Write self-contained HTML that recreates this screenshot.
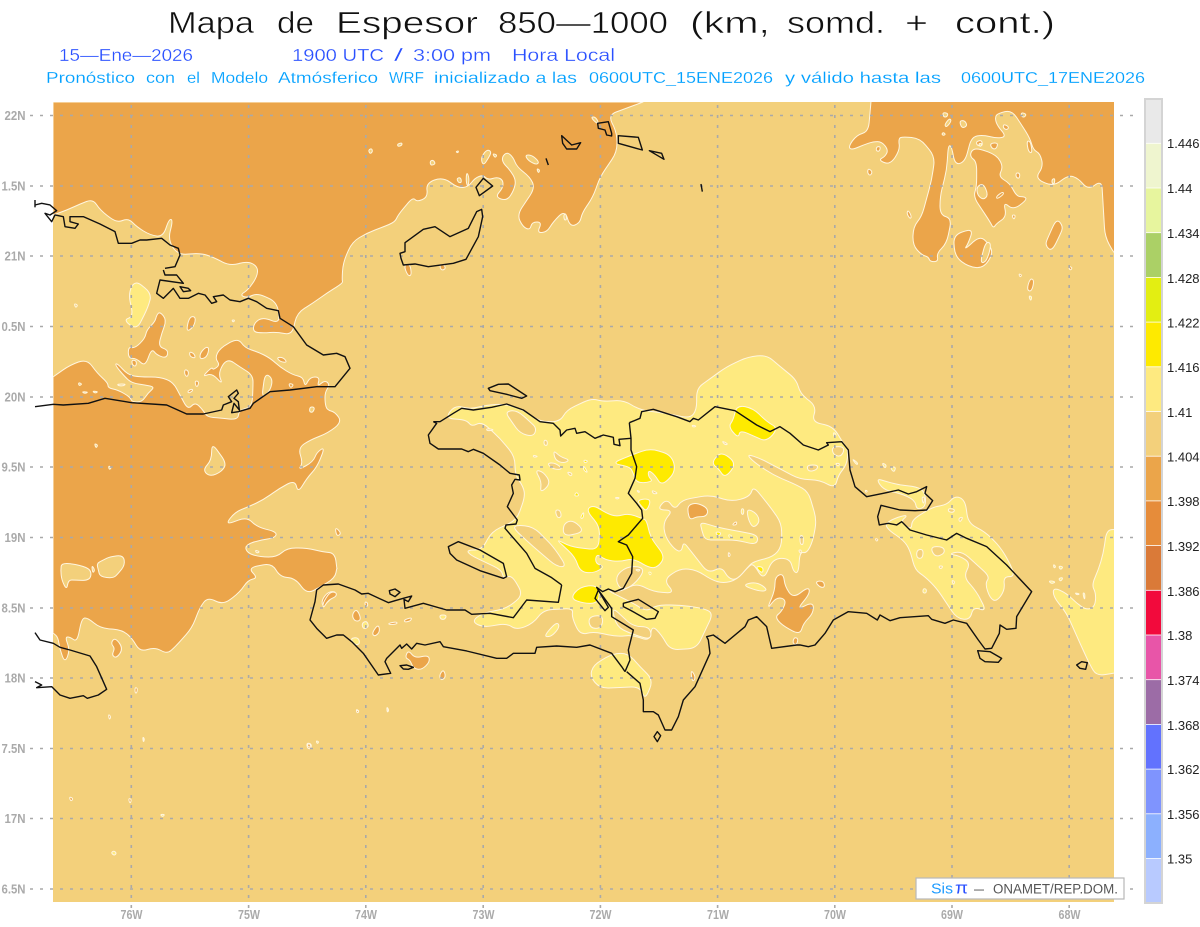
<!DOCTYPE html>
<html><head><meta charset="utf-8"><style>
html,body{margin:0;padding:0;background:#fff}
svg{display:block;font-family:"Liberation Sans",sans-serif}
.b{fill:#f3d07b}.o{fill:#eba54a}.y{fill:#feea80}.Y{fill:#feea00}
.m polygon,.m path{stroke:#fff6e0;stroke-linejoin:round}
.k polygon,.k polyline{fill:none;stroke:#111;stroke-linejoin:round}
.a{font-size:13px;font-weight:bold;fill:#aaa}
.l{font-size:13px;fill:#222}
.t{font-size:31px;fill:#111;stroke:#fff;stroke-width:.55px}
.u{font-size:17.5px;fill:#2a50ff;stroke:#fff;stroke-width:.25px}
.v{font-size:16px;fill:#00a0ff;stroke:#fff;stroke-width:.15px}
</style></head><body>
<svg width="1200" height="927" viewBox="0 0 1200 927" xmlns="http://www.w3.org/2000/svg">
<defs><clipPath id="mc"><rect x="53" y="102" width="1061" height="800"/></clipPath></defs>
<rect width="1200" height="927" fill="#fff"/>
<g class="t">
<text x="168" y="33" textLength="86" lengthAdjust="spacingAndGlyphs">Mapa</text>
<text x="277" y="33" textLength="37" lengthAdjust="spacingAndGlyphs">de</text>
<text x="336" y="33" textLength="142" lengthAdjust="spacingAndGlyphs">Espesor</text>
<text x="498" y="33" textLength="170" lengthAdjust="spacingAndGlyphs">850—1000</text>
<text x="690" y="33" textLength="80" lengthAdjust="spacingAndGlyphs">(km,</text>
<text x="787" y="33" textLength="98" lengthAdjust="spacingAndGlyphs">somd.</text>
<text x="905" y="33" textLength="23" lengthAdjust="spacingAndGlyphs">+</text>
<text x="955" y="33" textLength="100" lengthAdjust="spacingAndGlyphs">cont.)</text>
</g>
<g class="u">
<text x="59" y="61" textLength="134" lengthAdjust="spacingAndGlyphs">15—Ene—2026</text>
<text x="292" y="61" textLength="92" lengthAdjust="spacingAndGlyphs">1900 UTC</text>
<text x="394" y="61" textLength="9" lengthAdjust="spacingAndGlyphs">/</text>
<text x="413" y="61" textLength="78" lengthAdjust="spacingAndGlyphs">3:00 pm</text>
<text x="512" y="61" textLength="103" lengthAdjust="spacingAndGlyphs">Hora Local</text>
</g>
<g class="v">
<text x="46" y="83" textLength="89" lengthAdjust="spacingAndGlyphs">Pronóstico</text>
<text x="146" y="83" textLength="29" lengthAdjust="spacingAndGlyphs">con</text>
<text x="187" y="83" textLength="13" lengthAdjust="spacingAndGlyphs">el</text>
<text x="211" y="83" textLength="57" lengthAdjust="spacingAndGlyphs">Modelo</text>
<text x="278" y="83" textLength="100" lengthAdjust="spacingAndGlyphs">Atmósferico</text>
<text x="389" y="83" textLength="35" lengthAdjust="spacingAndGlyphs">WRF</text>
<text x="434" y="83" textLength="143" lengthAdjust="spacingAndGlyphs">inicializado a las</text>
<text x="589" y="83" textLength="184" lengthAdjust="spacingAndGlyphs">0600UTC_15ENE2026</text>
<text x="785" y="83" textLength="156" lengthAdjust="spacingAndGlyphs">y válido hasta las</text>
<text x="961" y="83" textLength="184" lengthAdjust="spacingAndGlyphs">0600UTC_17ENE2026</text>
</g>

<rect x="53" y="102" width="1061" height="800" class="b"/>
<g clip-path="url(#mc)"><g class="m">
<g stroke-width="1">
<polygon class="o" points="53,102 643,102 627,108 608,115 617,133 617,152 600,177 593,197 582,213 580,223 570,227 565,210 553,222 547,232 537,233 542,222 532,222 530,230 523,227 517,215 535,188 530,177 517,167 513,157 507,152 502,157 503,163 510,170 516,180 514,190 507,201 495,197 503,188 503,180 497,177 488,180 483,175 475,178 468,187 458,188 443,177 426,183 428,197 417,202 413,197 398,215 395,222 383,227 367,233 352,242 343,263 342,280 343,283 327,293 313,303 297,313 292,335 277,332 263,333 253,332 254,323 263,317 280,324 277,302 257,293 247,298 240,295 248,290 257,277 258,267 248,261 230,266 213,257 200,253 178,255 168,240 173,220 169,219 163,237 150,235 137,227 128,218 117,223 100,210 93,199 80,204 67,210 53,215"/>
<polygon class="o" points="53,377 70,365 87,359 97,373 108,383 108,388 118,390 130,397 132,402 142,402 148,393 155,387 145,385 132,383 125,377 115,365 117,363 128,375 140,377 160,377 173,382 180,395 188,410 195,402 203,410 207,417 220,418 238,420 239,410 252,407 253,388 253,375 240,367 227,358 218,373 223,385 212,373 202,377 212,367 213,370 220,365 215,358 220,348 238,338 245,348 258,352 270,358 280,367 293,375 303,377 305,387 310,377 320,377 317,387 325,380 330,385 325,392 325,403 327,410 335,412 342,422 328,433 310,440 298,448 303,463 298,470 313,462 317,452 325,447 317,467 307,478 298,493 295,480 280,488 263,500 248,507 235,512 225,525 247,517 257,527 277,532 275,538 260,540 245,545 247,553 260,557 277,557 287,548 307,548 323,552 335,553 337,570 337,567 335,578 320,587 307,594 295,578 280,577 272,563 248,568 258,578 248,580 240,592 223,605 208,597 200,607 192,628 175,647 167,654 155,647 140,652 132,638 122,630 100,628 88,618 82,618 77,642 70,637 65,637 70,650 65,663 60,650 58,637 53,633"/>
</g>

<g transform="translate(840,100) scale(.33333)" stroke-width="3">
<polygon class="o" points="93,5 85,95 50,105 25,140 35,150 70,135 100,125 125,125 145,150 135,170 115,180 150,195 180,150 175,115 190,110 240,115 285,170 275,240 245,350 220,380 218,435 245,465 265,470 270,485 295,485 290,460 320,430 335,355 300,345 300,290 320,210 325,135 335,140 345,195 375,185 395,110 430,105 470,115 500,110 470,75 465,50 475,40 515,30 545,75 570,115 580,150 600,160 610,200 585,235 640,260 685,225 715,235 745,270 785,240 795,410 822,460 830,460 830,0 93,0"/>
<polygon class="o" points="390,170 395,150 415,145 470,165 490,200 475,230 510,250 530,290 555,290 560,300 520,330 490,305 500,350 470,370 460,385 450,365 400,290 410,260 410,185"/>
<polygon class="b" points="410,260 430,250 445,285 430,300 412,285"/>
<polygon class="o" points="650,355 670,380 660,405 635,455 615,435 625,410"/>
<polygon class="o" points="340,405 400,385 385,430 372,450 420,408 445,430 460,460 430,505 385,500 345,470"/>
<polygon class="b" points="437,425 455,430 440,485 420,490"/>
<polygon class="o" points="205,330 215,350 210,357 200,340"/>
<polygon class="o" points="85,205 98,215 90,228 82,218"/>
<polygon class="o" points="570,535 583,540 575,575 560,570"/>
<polygon class="b" points="308,37 325,40 320,52 310,50"/>
<polygon class="b" points="328,55 335,62 320,82 313,75"/>
<polygon class="b" points="358,62 375,62 382,78 365,85"/>
<polygon class="b" points="310,97 317,103 310,107 305,102"/>
<polygon class="b" points="545,37 560,43 552,53 543,47"/>
<polygon class="o" points="490,72 507,80 502,90 490,85"/>
<polygon class="o" points="450,130 475,128 468,148 455,145"/>
<polygon class="o" points="560,122 572,125 577,160 565,155"/>
<polygon class="o" points="408,125 425,120 428,138 412,137"/>
<polygon class="o" points="528,218 540,220 538,236 528,232"/>
<polygon class="o" points="515,345 527,345 522,360"/>
<polygon class="o" points="110,140 122,140 118,155 108,152"/>
<polygon class="o" points="536,521 546,525 540,532"/>
<polygon class="o" points="685,498 698,503 690,512"/>
<polygon class="o" points="468,290 488,275 492,282 472,297"/>
<polygon class="b" points="636,238 645,235 643,252 636,250"/>
<polygon class="y" points="566,587 576,590 572,604"/>
<polygon class="y" points="415,130 427,130 421,142"/>
</g>

<g transform="translate(340,100) scale(.33333)" stroke-width="3">
<polygon class="b" points="422,175 440,148 455,155 445,175 430,197"/>
<polygon class="b" points="457,160 472,165 465,174"/>
<polygon class="b" points="555,165 575,165 598,185 590,195 565,182"/>
<polygon class="b" points="590,205 600,210 595,220"/>
<polygon class="b" points="752,52 765,50 775,65 772,72"/>
<polygon class="b" points="270,183 280,180 287,192 272,197"/>
<polygon class="b" points="350,235 362,232 365,248 355,248"/>
<polygon class="b" points="380,215 388,235 384,262 378,245"/>
<polygon class="b" points="85,150 95,145 98,155 90,162"/>
<polygon class="b" points="172,132 186,128 186,136 174,140"/>
<polygon class="b" points="347,155 356,152 354,159"/>
<polygon class="b" points="671,345 678,340 680,360 673,360"/>
<polygon class="o" points="298,497 310,492 318,505 305,512"/>
<polygon class="o" points="195,495 210,492 215,525 205,528 195,508"/>
</g>

<g transform="translate(30,270) scale(.33333)" stroke-width="3">
<polygon class="y" points="315,30 365,70 355,110 320,180 280,150 310,140 295,70"/>
<polygon class="o" points="390,125 410,150 395,190 385,230 415,240 410,265 380,255 365,235 345,290 320,265 295,265 295,230 315,235 345,205 350,180 375,155 380,135"/>
<polygon class="o" points="478,140 498,140 492,170 468,187"/>
<polygon class="o" points="528,230 538,235 530,262 510,268 510,250"/>
<polygon class="o" points="478,245 492,250 497,265 480,260"/>
<polygon class="o" points="465,297 477,305 472,322 463,312"/>
<polygon class="o" points="740,262 760,262 772,278 750,275"/>
<polygon class="b" points="705,310 728,325 722,360 695,385"/>
<polygon class="o" points="495,332 507,335 503,350 497,348"/>
<polygon class="o" points="483,357 490,360 478,370 472,365"/>
<polygon class="o" points="305,270 320,272 318,290 307,285"/>
<polygon class="o" points="775,340 792,343 782,355"/>
<polygon class="o" points="915,770 935,790 920,800"/>
<polygon class="b" points="545,518 590,580 575,605 540,620 518,600 545,570"/>
<polygon class="b" points="193,520 204,525 198,535"/>
<polygon class="b" points="145,337 157,342 147,348"/>
<polygon class="b" points="155,365 175,366 165,371"/>
<polygon class="b" points="187,363 205,365 195,370"/>
<polygon class="b" points="840,410 855,412 848,428 838,425"/>
<polygon class="b" points="262,342 288,342 280,348 265,347"/>
<polygon class="b" points="235,587 245,592 238,600"/>
<polygon class="b" points="132,100 144,105 137,114"/>
<polygon class="b" points="605,150 615,150 610,157"/>
<polygon class="b" points="675,840 690,845 680,850"/>
</g>

<g transform="translate(0,550) scale(.33333)" stroke-width="3">
<polygon class="b" points="185,38 240,45 275,60 270,92 225,90 205,90 200,120 185,90 182,60"/>
<polygon class="b" points="290,40 310,30 330,20 370,15 375,45 355,70 340,85 300,80 295,60"/>
<polygon class="b" points="275,45 285,60 278,70"/>
<polygon class="o" points="345,262 370,295 350,325 335,315 345,295 332,280"/>
<polygon class="o" points="405,412 413,415 410,430 405,428"/>
<polygon class="o" points="325,492 333,500 328,510"/>
<polygon class="o" points="207,740 220,745 213,755"/>
<polygon class="o" points="920,578 935,582 932,597 922,595"/>
<polygon class="o" points="1160,470 1167,480 1162,488"/>
<polygon class="o" points="1068,477 1078,483 1072,490"/>
<polygon class="o" points="385,745 395,748 390,762"/>
<polygon class="y" points="333,908 342,902 350,910 342,917"/>
<polygon class="y" points="480,793 495,793 488,801"/>
<polygon class="y" points="428,560 434,567 430,578"/>
<polygon class="y" points="948,572 957,575 952,582"/>
<polygon class="o" points="965,150 985,125 1010,125 995,145 968,170"/>
</g>

<g transform="translate(420,350) scale(.33333)" stroke-width="3">
<polygon class="y" points="75,205 105,165 150,178 200,165 255,162 310,180 360,215 420,215 440,180 515,145 550,155 610,150 660,180 740,190 810,205 830,180 830,115 865,90 920,50 985,20 1040,15 1075,45 1130,90 1140,130 1190,170 1175,215 1240,230 1270,280 1285,300 1280,345 1255,375 1245,415 1200,390 1140,388 1090,362 1020,325 980,312 1000,335 1060,375 1130,405 1165,425 1190,510 1178,575 1160,610 1140,605 1135,670 1120,665 1110,625 1060,625 1030,690 1000,640 985,650 950,690 910,700 875,690 830,660 780,655 730,690 765,730 700,725 650,700 610,720 590,725 560,720 640,760 680,785 710,765 780,765 850,775 880,790 830,895 750,900 725,855 695,825 690,875 640,855 590,860 520,845 480,855 455,800 460,775 370,780 340,820 290,840 260,820 190,832 155,815 185,790 260,775 310,735 275,675 250,685 245,660 150,615 140,600 185,600 215,545 290,510 315,440 310,410 285,375 285,320 240,265 185,215 155,230 140,210"/>
<polygon class="b" points="255,185 290,180 330,215 350,235 340,260 300,250 275,215"/>
<polygon class="b" points="200,235 225,240 200,243"/>
<polygon class="b" points="400,300 420,320 450,330 430,340 405,330"/>
<polygon class="b" points="380,340 405,338 430,358 400,358"/>
<polygon class="b" points="345,360 370,365 393,400 360,430 365,395"/>
<polygon class="b" points="340,315 355,320 340,322"/>
<polygon class="b" points="372,270 382,272 382,287 372,285"/>
<polygon class="b" points="440,365 458,370 452,380"/>
<polygon class="b" points="405,480 420,480 425,500 412,505"/>
<polygon class="b" points="430,520 460,510 495,545 430,560"/>
<polygon class="b" points="290,525 340,530 400,590 440,650 410,650 340,590 280,535"/>
<polygon class="b" points="585,442 600,443 590,448"/>
<polygon class="b" points="650,420 660,425 655,428"/>
<polygon class="b" points="695,420 715,430 700,432"/>
<polygon class="b" points="710,480 740,445 765,480 785,450 870,435 935,455 990,440 1000,408 1050,470 1085,520 1085,590 1060,620 1000,635 985,650 950,690 925,685 905,650 865,670 810,600 790,575 785,605 765,600 735,560 730,515 760,480"/>
<polygon class="y" points="840,515 885,530 935,540 1015,555 1010,585 950,570 890,570 855,570 845,540"/>
<polygon class="y" points="980,475 1010,490 1020,515 1000,535 985,510"/>
<polygon class="y" points="965,475 972,478 970,495 963,490"/>
<polygon class="b" points="585,680 620,650 665,650 670,670 635,710 600,720"/>
<polygon class="y" points="645,658 662,658 655,665"/>
<polygon class="b" points="505,800 550,795 545,835 510,835"/>
<polygon class="b" points="575,770 640,830 690,830 695,870 630,850 590,830"/>
<polygon class="y" points="370,860 410,815 420,830 395,860"/>
<polygon class="y" points="58,795 80,798 70,808"/>
<polygon class="y" points="965,705 1010,695 1045,720 1020,725"/>
<polygon class="b" points="1235,290 1275,290 1265,320 1240,315"/>
<polygon class="b" points="1160,345 1195,345 1190,360 1165,365"/>
<polygon class="b" points="1245,340 1260,340 1255,350"/>
<polygon class="b" points="1140,555 1150,558 1150,585 1140,582"/>
<polygon class="b" points="1135,600 1145,600 1142,612"/>
<polygon class="b" points="815,225 830,228 820,232"/>
<polygon class="b" points="905,272 925,282 915,285"/>
<polygon class="Y" points="950,165 1000,175 1040,215 1075,235 1040,275 1005,260 960,240 955,265 925,230 940,210"/>
<polygon class="Y" points="880,330 905,305 950,340 915,385 895,355 880,345"/>
<polygon class="Y" points="575,340 635,315 690,295 755,315 768,365 725,408 705,375 685,360 685,380 700,395 650,400 640,370 630,350"/>
<polygon class="Y" points="490,330 505,332 495,340"/>
<polygon class="Y" points="490,345 505,370 490,360"/>
<polygon class="Y" points="470,425 478,438 462,438"/>
<polygon class="Y" points="480,505 492,483 490,505"/>
<polygon class="Y" points="650,450 695,445 680,485 665,470"/>
<polygon class="Y" points="498,480 520,465 560,490 590,500 625,490 665,505 680,510 690,560 735,620 715,650 690,655 640,625 600,635 555,630 530,610 525,640 555,650 520,670 480,665 465,620 405,565 450,590 535,600 540,530"/>
<polygon class="Y" points="450,745 480,710 530,705 540,735 530,760 490,760"/>
<polygon class="Y" points="1005,650 1030,650 1028,672"/>
<polygon class="Y" points="885,545 905,548 895,560"/>
<polygon class="Y" points="925,553 937,558 928,563"/>
<polygon class="Y" points="685,665 695,668 690,677"/>
<polygon class="o" points="805,465 830,458 865,475 860,500 830,500 810,510 803,485"/>
<polygon class="o" points="935,525 950,513 950,525"/>
<polygon class="o" points="1065,680 1090,670 1095,710 1120,745 1165,710 1170,730 1130,780 1180,755 1180,790 1150,820 1140,855 1085,825 1065,800 1085,785 1100,750 1070,740 1040,780 1065,720"/>
<polygon class="o" points="1185,695 1210,692 1215,712 1200,712"/>
<polygon class="o" points="1122,862 1135,865 1130,885 1118,880"/>
<polygon class="o" points="925,605 932,615 925,622"/>
</g>

<g transform="translate(300,570) scale(.33333)" stroke-width="3">
<polygon class="y" points="940,250 880,285 870,320 900,355 1020,350 1035,390 1060,330 1020,290 985,250"/>
<polygon class="o" points="68,100 90,65 110,68 108,80 85,90 70,115"/>
<polygon class="o" points="155,135 170,115 185,150 165,155"/>
<polygon class="o" points="215,190 235,162 240,185 225,200"/>
<polygon class="y" points="185,160 200,152 207,170 190,178"/>
<polygon class="y" points="150,205 175,202 180,222 165,225"/>
<polygon class="y" points="418,135 440,135 435,148 422,148"/>
<polygon class="o" points="265,160 290,155 292,162 268,164"/>
<polygon class="o" points="312,150 335,142 333,152 315,157"/>
<polygon class="o" points="195,95 203,98 203,110 195,107"/>
<polygon class="o" points="315,263 325,240 345,265 385,255 390,275 365,300 340,295 330,270"/>
<polygon class="o" points="430,297 438,320 425,332 417,318"/>
<polygon class="o" points="1172,297 1188,322 1177,338"/>
<polygon class="o" points="20,522 33,522 28,535"/>
<polygon class="o" points="260,410 266,420 262,428"/>
<polygon class="o" points="168,420 177,423 172,430"/>
</g>

<g transform="translate(800,350) scale(.33333)" stroke-width="3">
<polygon class="y" points="228,385 260,395 300,405 350,410 375,425 378,470 350,480 345,450 300,430 250,420"/>
<polygon class="b" points="365,440 375,442 370,465"/>
<polygon class="y" points="410,715 470,805 510,810 520,770 560,785 530,725 490,680 512,640 480,618 445,612 485,603 570,680 555,700 570,745 590,755 615,720 610,680 645,680 630,640 600,590 555,545 505,520 495,450 465,437 440,465 400,470 335,510 335,540 300,515 325,495 295,500 255,520 265,540 310,570 330,600 345,660 375,680"/>
<polygon class="b" points="390,590 430,590 435,610 405,622"/>
<polygon class="b" points="445,475 465,478 460,488 445,485"/>
<polygon class="b" points="475,505 490,500 480,518"/>
<polygon class="b" points="350,600 370,597 368,625 350,625"/>
<polygon class="b" points="415,648 430,648 422,658"/>
<polygon class="b" points="455,690 465,695 460,705"/>
<polygon class="y" points="920,540 950,538 950,968 890,978 870,945 840,880 800,790 760,740 760,712 800,730 830,760 860,780 885,770 888,730 875,705 895,660 910,610"/>
<polygon class="y" points="775,648 790,650 782,660"/>
<polygon class="y" points="760,642 768,650 762,655"/>
<polygon class="y" points="775,685 790,682 782,695"/>
<polygon class="y" points="745,692 768,695 755,702"/>
<polygon class="y" points="848,728 855,730 854,752"/>
<polygon class="y" points="825,728 840,732 830,735"/>
<polygon class="y" points="245,338 260,345 255,356"/>
<polygon class="y" points="270,352 288,350 282,368"/>
<polygon class="y" points="155,325 175,340 170,345"/>
<polygon class="y" points="370,715 380,718 378,730 368,728"/>
<polygon class="y" points="100,245 110,255 102,262"/>
<polygon class="o" points="225,565 235,568 230,575"/>
<polygon class="o" points="195,420 203,423 198,428"/>
</g>
</g></g>

<g stroke="#a9a9a9" stroke-width="1.6" stroke-dasharray="3 7" fill="none">
<line x1="30" x2="1134" y1="115.5" y2="115.5"/><line x1="30" x2="1134" y1="186" y2="186"/><line x1="30" x2="1134" y1="256" y2="256"/><line x1="30" x2="1134" y1="326.5" y2="326.5"/><line x1="30" x2="1134" y1="397" y2="397"/><line x1="30" x2="1134" y1="467" y2="467"/><line x1="30" x2="1134" y1="537.5" y2="537.5"/><line x1="30" x2="1134" y1="608" y2="608"/><line x1="30" x2="1134" y1="678" y2="678"/><line x1="30" x2="1134" y1="748.5" y2="748.5"/><line x1="30" x2="1134" y1="818.5" y2="818.5"/><line x1="30" x2="1134" y1="889" y2="889"/>
<line x1="131.3" x2="131.3" y1="105" y2="908"/><line x1="248.6" x2="248.6" y1="105" y2="908"/><line x1="365.8" x2="365.8" y1="105" y2="908"/><line x1="483.2" x2="483.2" y1="105" y2="908"/><line x1="600.4" x2="600.4" y1="105" y2="908"/><line x1="717.6" x2="717.6" y1="105" y2="908"/><line x1="834.8" x2="834.8" y1="105" y2="908"/><line x1="952" x2="952" y1="105" y2="908"/><line x1="1069.2" x2="1069.2" y1="105" y2="908"/>
</g>

<g class="k">
<g transform="translate(420,350) scale(.33333)" stroke-width="4.2">
<polyline points="40,215 60,215 100,190 125,175 160,180 215,172 260,162 310,180 360,215 400,220 420,240 422,258 440,240 465,235 470,250 495,245 525,265 550,255 580,262 582,283 600,287 597,268 633,265"/>
<polyline points="628,218 660,205 665,185 700,178 770,200 810,215 820,205 835,210 885,170 945,182 1010,225 1050,245 1080,230 1110,250 1150,285 1195,300 1225,285 1220,278 1265,275 1285,300 1290,360 1305,410 1340,440 1390,430 1435,420 1465,432 1490,425 1520,410 1515,430 1538,452 1520,480 1485,482 1440,480 1383,466 1373,500 1378,525 1405,520 1430,525 1445,515 1470,540 1520,555 1580,570 1610,550 1640,565 1700,590 1760,645 1835,725 1790,800 1788,835 1760,838 1740,825 1738,850 1715,895 1695,897 1675,870 1640,820 1600,810 1575,820 1535,808 1525,797 1440,803 1410,812 1380,795 1372,810 1340,790 1285,785 1240,810 1215,850 1185,885 1165,890 1140,885 1130,885 1055,895 1040,830 1010,800 985,810 975,830 915,880 880,855 860,860 865,870 870,910 825,1010 790,1050 775,1100 755,1140 735,1140 715,1095 700,1085 670,1085 670,1050 660,1000 620,965"/>
<polyline points="615,965 630,930 625,900 640,840 575,800 575,775 535,720 525,745 555,782 565,772 530,712 548,725 565,717 585,725 610,715 635,670 638,620 620,585 595,575 625,555 668,505 665,480 650,460 625,430 645,385 650,350 633,300 633,265 628,218"/>
<polygon points="85,590 115,575 180,600 250,640 260,680 250,685 180,662 110,630 90,610"/>
<polygon points="205,115 235,103 265,102 320,138 305,145 260,133 210,122"/>
<polygon points="610,760 655,748 715,785 705,805 680,808 630,780 610,770"/>
<polyline points="425,705 395,683 345,655 320,610 255,535 258,525 288,522 292,510 262,470 280,430 275,405 285,388 300,390 298,375 270,370 240,345 190,310 160,298 145,305 125,297 55,297 30,280 25,255 50,220 40,215"/>
</g>
<g transform="translate(300,570) scale(.33333)" stroke-width="4.2">
<polyline points="975,305 965,290 935,250 870,225 830,232 770,228 710,232 705,250 640,250 620,265 590,265 500,243 430,230 420,215 375,225 350,220 335,237 320,222 305,235 300,225 260,265 255,275 272,310 235,315 190,250 155,215 130,195 110,195 80,205 50,175 30,150 45,95 50,60 70,45 115,42 165,60 185,72 205,70 265,98 285,92 310,85 335,78 325,95 312,88 315,115 370,100 440,120 495,120 515,133 570,130 640,143 680,90 775,97 785,45"/>
<polygon points="268,62 285,57 300,67 285,80 270,72"/>
<polygon points="300,287 320,285 340,292 325,298 310,297"/>
<polygon points="1072,485 1082,497 1072,515 1062,500"/>
</g>
<g transform="translate(800,350) scale(.33333)" stroke-width="4.2">
<polygon points="533,902 570,905 605,925 595,937 555,935 540,925"/>
<polygon points="830,945 845,935 862,938 857,958 840,955"/>
</g>
<g transform="scale(.33333)" stroke-width="4.2">
<polyline points="105,600 105,622"/>
<polyline points="105,615 125,610 150,615 170,632 150,645 135,640 155,665 165,645 190,650 195,680 225,685 235,672 210,665 210,650 250,650 300,672 345,695 355,730 395,730 420,720 440,720 485,715 510,735 535,745 540,765 525,800 495,805"/>
</g>
<g transform="translate(30,270) scale(.33333)" stroke-width="4.2">
<polyline points="400,0 405,15 440,15 460,40 390,30 380,70 400,85 430,55 450,85 475,85 505,70 525,75 545,100 560,95 550,80 580,75 600,90 630,95 655,85 680,95 710,115 745,122 750,145 790,170 830,225 880,255 920,250 945,260 960,295 915,350 860,350 780,360 720,365 670,400 660,415 625,425 605,428 612,400 628,420 625,395 612,385 625,370 620,360 595,380 605,395 580,405 575,420 520,432 470,432 410,405 305,398 225,385 175,400 100,405 70,403 15,410"/>
<polygon points="450,50 475,55 482,62 460,65"/>
</g>
<g transform="translate(0,550) scale(.33333)" stroke-width="4.2">
<polyline points="105,248 120,270 160,280 180,292 210,300 270,318 290,350 320,418 295,435 262,445 250,437 210,445 180,435 155,410 110,413 125,405 105,395"/>
</g>
<g transform="translate(340,100) scale(.33333)" stroke-width="4.2">
<polygon points="180,460 195,455 195,428 250,388 285,380 330,410 385,385 410,335 425,328 428,350 415,410 378,478 340,490 265,500 225,492 190,495 183,475"/>
<polygon points="408,262 430,235 458,258 418,287"/>
<polygon points="665,107 695,135 722,128 710,147 680,147 668,130"/>
<polygon points="773,70 805,65 815,100 815,108 800,105 795,90 775,85"/>
<polygon points="835,107 895,112 907,150 835,130"/>
<polygon points="928,152 965,160 972,178"/>
<polyline points="618,175 625,195"/>
<polyline points="1083,252 1087,275"/>
</g>
</g>

<g class="a" text-anchor="end">
<text x="25.5" y="120" textLength="21" lengthAdjust="spacingAndGlyphs">22N</text><text x="25.5" y="190.5" textLength="24" lengthAdjust="spacingAndGlyphs">1.5N</text><text x="25.5" y="260.5" textLength="21" lengthAdjust="spacingAndGlyphs">21N</text><text x="25.5" y="331" textLength="24" lengthAdjust="spacingAndGlyphs">0.5N</text><text x="25.5" y="401.5" textLength="21" lengthAdjust="spacingAndGlyphs">20N</text><text x="25.5" y="471.5" textLength="24" lengthAdjust="spacingAndGlyphs">9.5N</text><text x="25.5" y="542" textLength="21" lengthAdjust="spacingAndGlyphs">19N</text><text x="25.5" y="612.5" textLength="24" lengthAdjust="spacingAndGlyphs">8.5N</text><text x="25.5" y="682.5" textLength="21" lengthAdjust="spacingAndGlyphs">18N</text><text x="25.5" y="753" textLength="24" lengthAdjust="spacingAndGlyphs">7.5N</text><text x="25.5" y="823" textLength="21" lengthAdjust="spacingAndGlyphs">17N</text><text x="25.5" y="893.5" textLength="24" lengthAdjust="spacingAndGlyphs">6.5N</text>
</g>
<g class="a" text-anchor="middle">
<text x="131.5" y="919" textLength="22" lengthAdjust="spacingAndGlyphs">76W</text><text x="249" y="919" textLength="22" lengthAdjust="spacingAndGlyphs">75W</text><text x="366" y="919" textLength="22" lengthAdjust="spacingAndGlyphs">74W</text><text x="483.5" y="919" textLength="22" lengthAdjust="spacingAndGlyphs">73W</text><text x="600.5" y="919" textLength="22" lengthAdjust="spacingAndGlyphs">72W</text><text x="718" y="919" textLength="22" lengthAdjust="spacingAndGlyphs">71W</text><text x="835" y="919" textLength="22" lengthAdjust="spacingAndGlyphs">70W</text><text x="952" y="919" textLength="22" lengthAdjust="spacingAndGlyphs">69W</text><text x="1069.5" y="919" textLength="22" lengthAdjust="spacingAndGlyphs">68W</text>
</g>

<rect x="1144" y="98" width="19" height="806" fill="#d4d4d4"/>
<rect x="1146" y="100" width="15" height="43.3" fill="#e9e9e9"/>
<rect x="1146" y="143.3" width="15" height="44.7" fill="#eff5cf"/>
<rect x="1146" y="188" width="15" height="44.7" fill="#e7f59e"/>
<rect x="1146" y="232.7" width="15" height="44.7" fill="#abd066"/>
<rect x="1146" y="277.4" width="15" height="44.7" fill="#e3ee12"/>
<rect x="1146" y="322.1" width="15" height="44.7" fill="#feea00"/>
<rect x="1146" y="366.8" width="15" height="44.7" fill="#feea80"/>
<rect x="1146" y="411.5" width="15" height="44.7" fill="#f3d07b"/>
<rect x="1146" y="456.2" width="15" height="44.7" fill="#eba54a"/>
<rect x="1146" y="500.9" width="15" height="44.7" fill="#e68c3a"/>
<rect x="1146" y="545.6" width="15" height="44.7" fill="#da7a38"/>
<rect x="1146" y="590.3" width="15" height="44.7" fill="#f20a3c"/>
<rect x="1146" y="635" width="15" height="44.7" fill="#e855a8"/>
<rect x="1146" y="679.7" width="15" height="44.7" fill="#9c6ca6"/>
<rect x="1146" y="724.4" width="15" height="44.7" fill="#6272fe"/>
<rect x="1146" y="769.1" width="15" height="44.7" fill="#7f94fe"/>
<rect x="1146" y="813.8" width="15" height="44.7" fill="#8cb0fe"/>
<rect x="1146" y="858.5" width="15" height="43.5" fill="#b8caff"/>
<g stroke="#fff" stroke-width=".8"><line x1="1146" x2="1161" y1="143.3" y2="143.3"/><line x1="1146" x2="1161" y1="188" y2="188"/><line x1="1146" x2="1161" y1="232.7" y2="232.7"/><line x1="1146" x2="1161" y1="277.4" y2="277.4"/><line x1="1146" x2="1161" y1="322.1" y2="322.1"/><line x1="1146" x2="1161" y1="366.8" y2="366.8"/><line x1="1146" x2="1161" y1="411.5" y2="411.5"/><line x1="1146" x2="1161" y1="456.2" y2="456.2"/><line x1="1146" x2="1161" y1="500.9" y2="500.9"/><line x1="1146" x2="1161" y1="545.6" y2="545.6"/><line x1="1146" x2="1161" y1="590.3" y2="590.3"/><line x1="1146" x2="1161" y1="635" y2="635"/><line x1="1146" x2="1161" y1="679.7" y2="679.7"/><line x1="1146" x2="1161" y1="724.4" y2="724.4"/><line x1="1146" x2="1161" y1="769.1" y2="769.1"/><line x1="1146" x2="1161" y1="813.8" y2="813.8"/><line x1="1146" x2="1161" y1="858.5" y2="858.5"/></g>
<g class="l">
<text x="1167" y="148">1.446</text><text x="1167" y="193">1.44</text><text x="1167" y="238">1.434</text><text x="1167" y="283">1.428</text><text x="1167" y="327.5">1.422</text><text x="1167" y="372">1.416</text><text x="1167" y="417">1.41</text><text x="1167" y="461.5">1.404</text><text x="1167" y="506">1.398</text><text x="1167" y="551">1.392</text><text x="1167" y="596">1.386</text><text x="1167" y="640">1.38</text><text x="1167" y="685">1.374</text><text x="1167" y="730">1.368</text><text x="1167" y="774">1.362</text><text x="1167" y="819">1.356</text><text x="1167" y="863.5">1.35</text>
</g>

<rect x="916" y="878" width="208" height="21" fill="#fff" stroke="#b8b8b8" stroke-width="1.2"/>
<text x="931" y="893.5" font-size="15" fill="#1e9bff" textLength="22" lengthAdjust="spacingAndGlyphs">Sis</text>
<text x="955" y="893.5" font-size="17" fill="#2a50ff" textLength="13" lengthAdjust="spacingAndGlyphs">π</text>
<text x="974" y="893.5" font-size="13.5" fill="#555" textLength="10" lengthAdjust="spacingAndGlyphs">—</text>
<text x="993" y="893.5" font-size="13.5" fill="#555" textLength="125" lengthAdjust="spacingAndGlyphs">ONAMET/REP.DOM.</text>
</svg>
<script>
document.querySelectorAll('.m polygon').forEach(function(p){
var n=p.getAttribute('points').trim().split(/\s+/).map(function(s){return s.split(',').map(Number)});
var sc=p.getCTM().a,R=9/sc,L=60/sc,d='',N=n.length;
function dist(a,b){return Math.hypot(a[0]-b[0],a[1]-b[1])}
for(var i=0;i<N;i++){var V=n[i],P=n[(i+N-1)%N],X=n[(i+1)%N],a=dist(V,P),b=dist(V,X),c=d?'L':'M';
if(a>L||b>L){d+=c+V[0]+' '+V[1];continue}
var ta=Math.min(.5,R/a),tb=Math.min(.5,R/b);
d+=c+(V[0]+(P[0]-V[0])*ta)+' '+(V[1]+(P[1]-V[1])*ta)+'Q'+V[0]+' '+V[1]+' '+(V[0]+(X[0]-V[0])*tb)+' '+(V[1]+(X[1]-V[1])*tb)}
var q=document.createElementNS('http://www.w3.org/2000/svg','path');
q.setAttribute('d',d+'Z');q.setAttribute('class',p.getAttribute('class'));
p.parentNode.replaceChild(q,p)});
</script>
</body></html>
